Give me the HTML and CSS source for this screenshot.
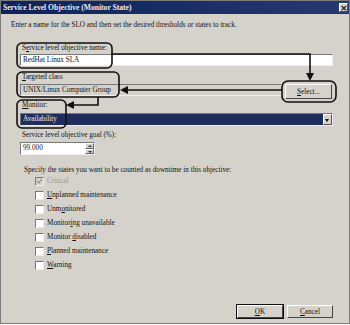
FILE: index.html
```html
<!DOCTYPE html>
<html lang="en">

<head>
  <meta charset="UTF-8">
  <title>Service Level Objective (Monitor State)</title>
  <link rel="stylesheet" href="styles.css">
</head>

<body>
  <div class="dialog">
    <div class="titlebar">
      <span>Service Level Objective (Monitor State)</span>
      <span class="close">&#215;</span>
    </div>

    <div class="body">
      <p class="intro">Enter a name for the SLO and then set the desired thresholds or states to track.</p>

      <label class="lbl first">S<u>e</u>rvice level objective name:</label>
      <div class="textbox wide">RedHat Linux SLA</div>

      <label class="lbl second"><u>T</u>argeted class</label>
      <div class="row">
        <div class="textbox readonly">UNIX/Linux Computer Group</div>
        <button class="btn select"><u>S</u>elect...</button>
      </div>

      <label class="lbl third"><u>M</u>onitor:</label>
      <div class="combo">
        <span class="combo-value">Availability</span>
        <span class="combo-arrow"></span>
      </div>

      <label class="lbl goal">Service level objective <u>g</u>oal (%):</label>
      <div class="spinner">
        <span class="spin-value">99.000</span>
        <span class="spin-btns">
          <span class="spin up"></span>
          <span class="spin down"></span>
        </span>
      </div>

      <p class="states">Specify the states you want to be counted as downtime in this objective:</p>
      <ul class="checks">
        <li class="disabled"><span class="box checked"></span><span>Critical</span></li>
        <li><span class="box"></span><span><u>U</u>nplanned maintenance</span></li>
        <li><span class="box"></span><span>Unm<u>o</u>nitored</span></li>
        <li><span class="box"></span><span>Monitor<u>i</u>ng unavailable</span></li>
        <li><span class="box"></span><span>Monitor <u>d</u>isabled</span></li>
        <li><span class="box"></span><span><u>P</u>lanned maintenance</span></li>
        <li><span class="box"></span><span><u>W</u>arning</span></li>
      </ul>

      <div class="footer">
        <button class="btn action default"><u>O</u>K</button>
        <button class="btn action"><u>C</u>ancel</button>
      </div>
    </div>

    <!-- callouts drawn over the dialog -->
    <svg class="callouts" width="350" height="325" viewBox="0 0 350 325">
      <g fill="none" stroke="#111" stroke-width="1.6">
        <rect x="17" y="43" width="95" height="25" rx="5" />
        <rect x="17" y="72" width="102" height="25" rx="5" />
        <rect x="17" y="100" width="49" height="28" rx="5" />
        <rect x="282" y="81" width="54" height="21" rx="6" />
        <polyline points="112,54 310,54 310,74" />
        <polyline points="282,90 127,90" />
        <polyline points="98,97 98,105 73,105" />
      </g>
      <g fill="#111">
        <polygon points="306,73 314,73 310,81" />
        <polygon points="128,86 128,94 120,90" />
        <polygon points="74,101 74,109 66,105" />
      </g>
    </svg>
  </div>
</body>

</html>
```

FILE: styles.css
```css
body {
  margin: 0;
  background: #fff;
  font-family: "Liberation Serif", "Times New Roman", serif;
  font-size: 7.2px;
  color: #111;
}

.dialog {
  position: relative;
  box-sizing: border-box;
  width: 350px;
  height: 324px;
  background: #d5d2cb;
  border: 1px solid #7c7c7c;
  display: flex;
  flex-direction: column;
}

.titlebar {
  height: 13px;
  background: linear-gradient(90deg, #0d215b, #263a70);
  color: #eee;
  font-weight: bold;
  font-size: 7.6px;
  line-height: 13px;
  padding-left: 2px;
  display: flex;
  justify-content: space-between;
  align-items: center;
}

.close {
  width: 9px;
  height: 9px;
  margin-right: 1px;
  background: #d5d2cb;
  color: #111;
  font-family: "DejaVu Sans", sans-serif;
  font-size: 9px;
  line-height: 9px;
  text-align: center;
  border: 1px solid;
  border-color: #fff #555 #555 #fff;
  box-sizing: border-box;
}

.body {
  flex: 1;
  display: flex;
  flex-direction: column;
  align-items: flex-start;
  padding: 0 16px 5px 19px;
}

.intro {
  margin: 7px 0 0 -9px;
  line-height: 9px;
}

.lbl {
  display: block;
  line-height: 9px;
  margin-left: 2px;
}

.lbl.first {
  margin-top: 14px;
  margin-bottom: 1px;
}

.lbl.second {
  margin-top: 7px;
  margin-bottom: 2px;
}

.lbl.third {
  margin-top: 2px;
  margin-bottom: 3px;
}

.lbl.goal {
  margin-top: 5px;
  margin-bottom: 2px;
}

.textbox {
  box-sizing: border-box;
  height: 12px;
  line-height: 10px;
  padding-left: 2px;
  background: #fff;
  border: 1px solid;
  border-color: #777 #eee #eee #777;
}

.textbox.wide {
  width: 313px;
}

.textbox.readonly {
  width: 262px;
  background: #d5d2cb;
}

.row {
  display: flex;
  gap: 3px;
  height: 15px;
}

.btn {
  box-sizing: border-box;
  padding: 0;
  font-family: inherit;
  font-size: 7.2px;
  color: #111;
  background: #d5d2cb;
  border: 1px solid;
  border-color: #fff #444 #444 #fff;
}

.btn.select {
  width: 47px;
  height: 15px;
}

.combo {
  box-sizing: border-box;
  width: 313px;
  height: 13px;
  display: flex;
  background: #1f2d5d;
  border: 1px solid;
  border-color: #777 #eee #eee #777;
}

.combo-value {
  flex: 1;
  color: #eee;
  line-height: 11px;
  padding-left: 2px;
}

.combo-arrow {
  width: 9px;
  background: #d5d2cb;
  border: 1px solid;
  border-color: #fff #555 #555 #fff;
  box-sizing: border-box;
  position: relative;
}

.combo-arrow::after {
  content: "";
  position: absolute;
  left: 1px;
  top: 4px;
  border-left: 2.5px solid transparent;
  border-right: 2.5px solid transparent;
  border-top: 3px solid #111;
}

.spinner {
  box-sizing: border-box;
  width: 75px;
  height: 13px;
  display: flex;
  background: #fff;
  border: 1px solid;
  border-color: #777 #eee #eee #777;
}

.spin-value {
  flex: 1;
  line-height: 11px;
  padding-left: 2px;
}

.spin-btns {
  width: 9px;
  display: flex;
  flex-direction: column;
}

.spin {
  flex: 1;
  background: #d5d2cb;
  border: 1px solid;
  border-color: #fff #666 #666 #fff;
  position: relative;
}

.spin::after {
  content: "";
  position: absolute;
  left: 2px;
  top: 1px;
  border-left: 2px solid transparent;
  border-right: 2px solid transparent;
}

.spin.up::after {
  border-bottom: 2px solid #333;
}

.spin.down::after {
  border-top: 2px solid #333;
}

.states {
  margin: 11px 0 0 4px;
  line-height: 8px;
}

.checks {
  list-style: none;
  margin: 0;
  padding: 0 0 0 15px;
}

.checks li {
  height: 14px;
  display: flex;
  align-items: center;
  gap: 3px;
}

.box {
  box-sizing: border-box;
  width: 9px;
  height: 9px;
  background: #fff;
  border: 1px solid;
  border-color: #777 #eee #eee #777;
  position: relative;
}

.checks li.disabled {
  color: #999;
}

.box.checked {
  background: #d5d2cb;
}

.box.checked::after {
  content: "";
  position: absolute;
  left: 2px;
  top: 0;
  width: 2px;
  height: 4px;
  border: solid #888;
  border-width: 0 1.5px 1.5px 0;
  transform: rotate(40deg);
}

.footer {
  margin-top: auto;
  align-self: flex-end;
  display: flex;
  gap: 4px;
}

.btn.action {
  width: 46px;
  height: 13px;
}

.btn.default {
  outline: 1px solid #111;
}

.callouts {
  position: absolute;
  left: -1px;
  top: -1px;
  pointer-events: none;
}
```
